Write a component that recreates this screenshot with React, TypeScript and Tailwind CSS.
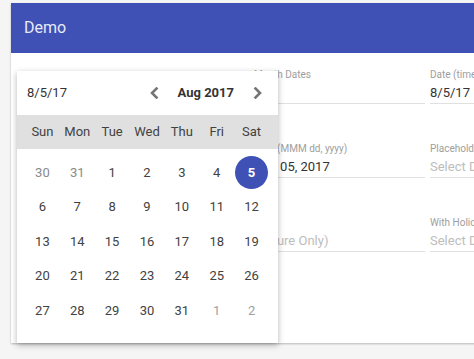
import React from "react";

const days: { d: number; muted?: boolean; sel?: boolean }[][] = [
  [{ d: 30, muted: true }, { d: 31, muted: true }, { d: 1 }, { d: 2 }, { d: 3 }, { d: 4 }, { d: 5, sel: true }],
  [{ d: 6 }, { d: 7 }, { d: 8 }, { d: 9 }, { d: 10 }, { d: 11 }, { d: 12 }],
  [{ d: 13 }, { d: 14 }, { d: 15 }, { d: 16 }, { d: 17 }, { d: 18 }, { d: 19 }],
  [{ d: 20 }, { d: 21 }, { d: 22 }, { d: 23 }, { d: 24 }, { d: 25 }, { d: 26 }],
  [{ d: 27 }, { d: 28 }, { d: 29 }, { d: 30 }, { d: 31 }, { d: 1, muted: true }, { d: 2, muted: true }],
];

const weekdays = ["Sun", "Mon", "Tue", "Wed", "Thu", "Fri", "Sat"];

function Field({ label, value, placeholder }: { label?: string; value?: string; placeholder?: string }) {
  return (
    <div className="h-[74px] pt-[16px] flex flex-col">
      <div className="text-[10px] leading-[12px] text-[#9e9e9e] whitespace-nowrap overflow-hidden h-[12px]">{label ?? ""}</div>
      <div className="mt-[2px] h-[21px] border-b border-[#e0e0e0] text-[13px] leading-[20px] whitespace-nowrap overflow-hidden">
        {value ? <span className="text-[#333]">{value}</span> : <span className="text-[#bdbdbd]">{placeholder ?? ""}</span>}
      </div>
    </div>
  );
}

function Chevron({ dir }: { dir: "left" | "right" }) {
  return (
    <svg width="10" height="12" viewBox="0 0 10 12" className="shrink-0">
      <path
        d={dir === "left" ? "M7.5 1.5 L3 6 L7.5 10.5" : "M2.5 1.5 L7 6 L2.5 10.5"}
        fill="none"
        stroke="#757575"
        strokeWidth="2.6"
        strokeLinecap="square"
        strokeLinejoin="miter"
      />
    </svg>
  );
}

export default function App() {
  return (
    <div className="w-[474px] h-[359px] bg-[#f5f5f5] overflow-hidden pt-[3px] pl-[11px] font-['Roboto',sans-serif]">
      <div className="w-[600px] h-[340px] bg-white flex flex-col shadow-[0_1px_2px_rgba(0,0,0,0.25)]">
        <div className="h-[50px] bg-[#3f51b5] flex items-center pl-[13px] shrink-0">
          <span className="text-[16px] text-[#e8eaf6]">Demo</span>
        </div>
        <div className="relative flex-1">
          <div className="grid grid-cols-[171px_171px_171px] gap-x-[5px] pl-[67px]">
            <Field />
            <Field label="Month Dates" />
            <Field label="Date (timezone)" value="8/5/17" />
            <Field />
            <Field label="Date (MMM dd, yyyy)" value="Aug 05, 2017" />
            <Field label="Placeholder" placeholder="Select Date" />
            <Field />
            <Field placeholder="(Future Only)" />
            <Field label="With Holidays" placeholder="Select Date" />
          </div>

          <div className="absolute left-[6px] top-[18px] w-[261px] h-[272px] bg-white shadow-[0_2px_6px_rgba(0,0,0,0.3)]">
            <div className="h-[44px] flex items-center pl-[10px] pr-[15px]">
              <span className="text-[13px] text-[#333]">8/5/17</span>
              <div className="ml-auto flex items-center gap-[19px]">
                <Chevron dir="left" />
                <span className="text-[13px] font-bold text-[#333]">Aug 2017</span>
                <Chevron dir="right" />
              </div>
            </div>
            <div className="h-[34px] bg-[#e0e0e0] grid grid-cols-7 pl-[8px] pr-[9px] items-center">
              {weekdays.map((w) => (
                <div key={w} className="text-center text-[13px] text-[#424242]">
                  {w}
                </div>
              ))}
            </div>
            <div className="mt-[6px] pl-[8px] pr-[9px] flex flex-col">
              {days.map((row, i) => (
                <div key={i} className="grid grid-cols-7 h-[34.5px] items-center">
                  {row.map((c, j) => (
                    <div key={j} className="flex items-center justify-center">
                      {c.sel ? (
                        <div className="w-[33px] h-[33px] rounded-full bg-[#3f51b5] flex items-center justify-center text-[13px] font-bold text-white">
                          {c.d}
                        </div>
                      ) : (
                        <span className={"text-[13px] " + (c.muted ? (i === 0 ? "text-[#8a8a8a]" : "text-[#a0a0a0]") : "text-[#424242]")}>
                          {c.d}
                        </span>
                      )}
                    </div>
                  ))}
                </div>
              ))}
            </div>
          </div>
        </div>
      </div>
    </div>
  );
}
